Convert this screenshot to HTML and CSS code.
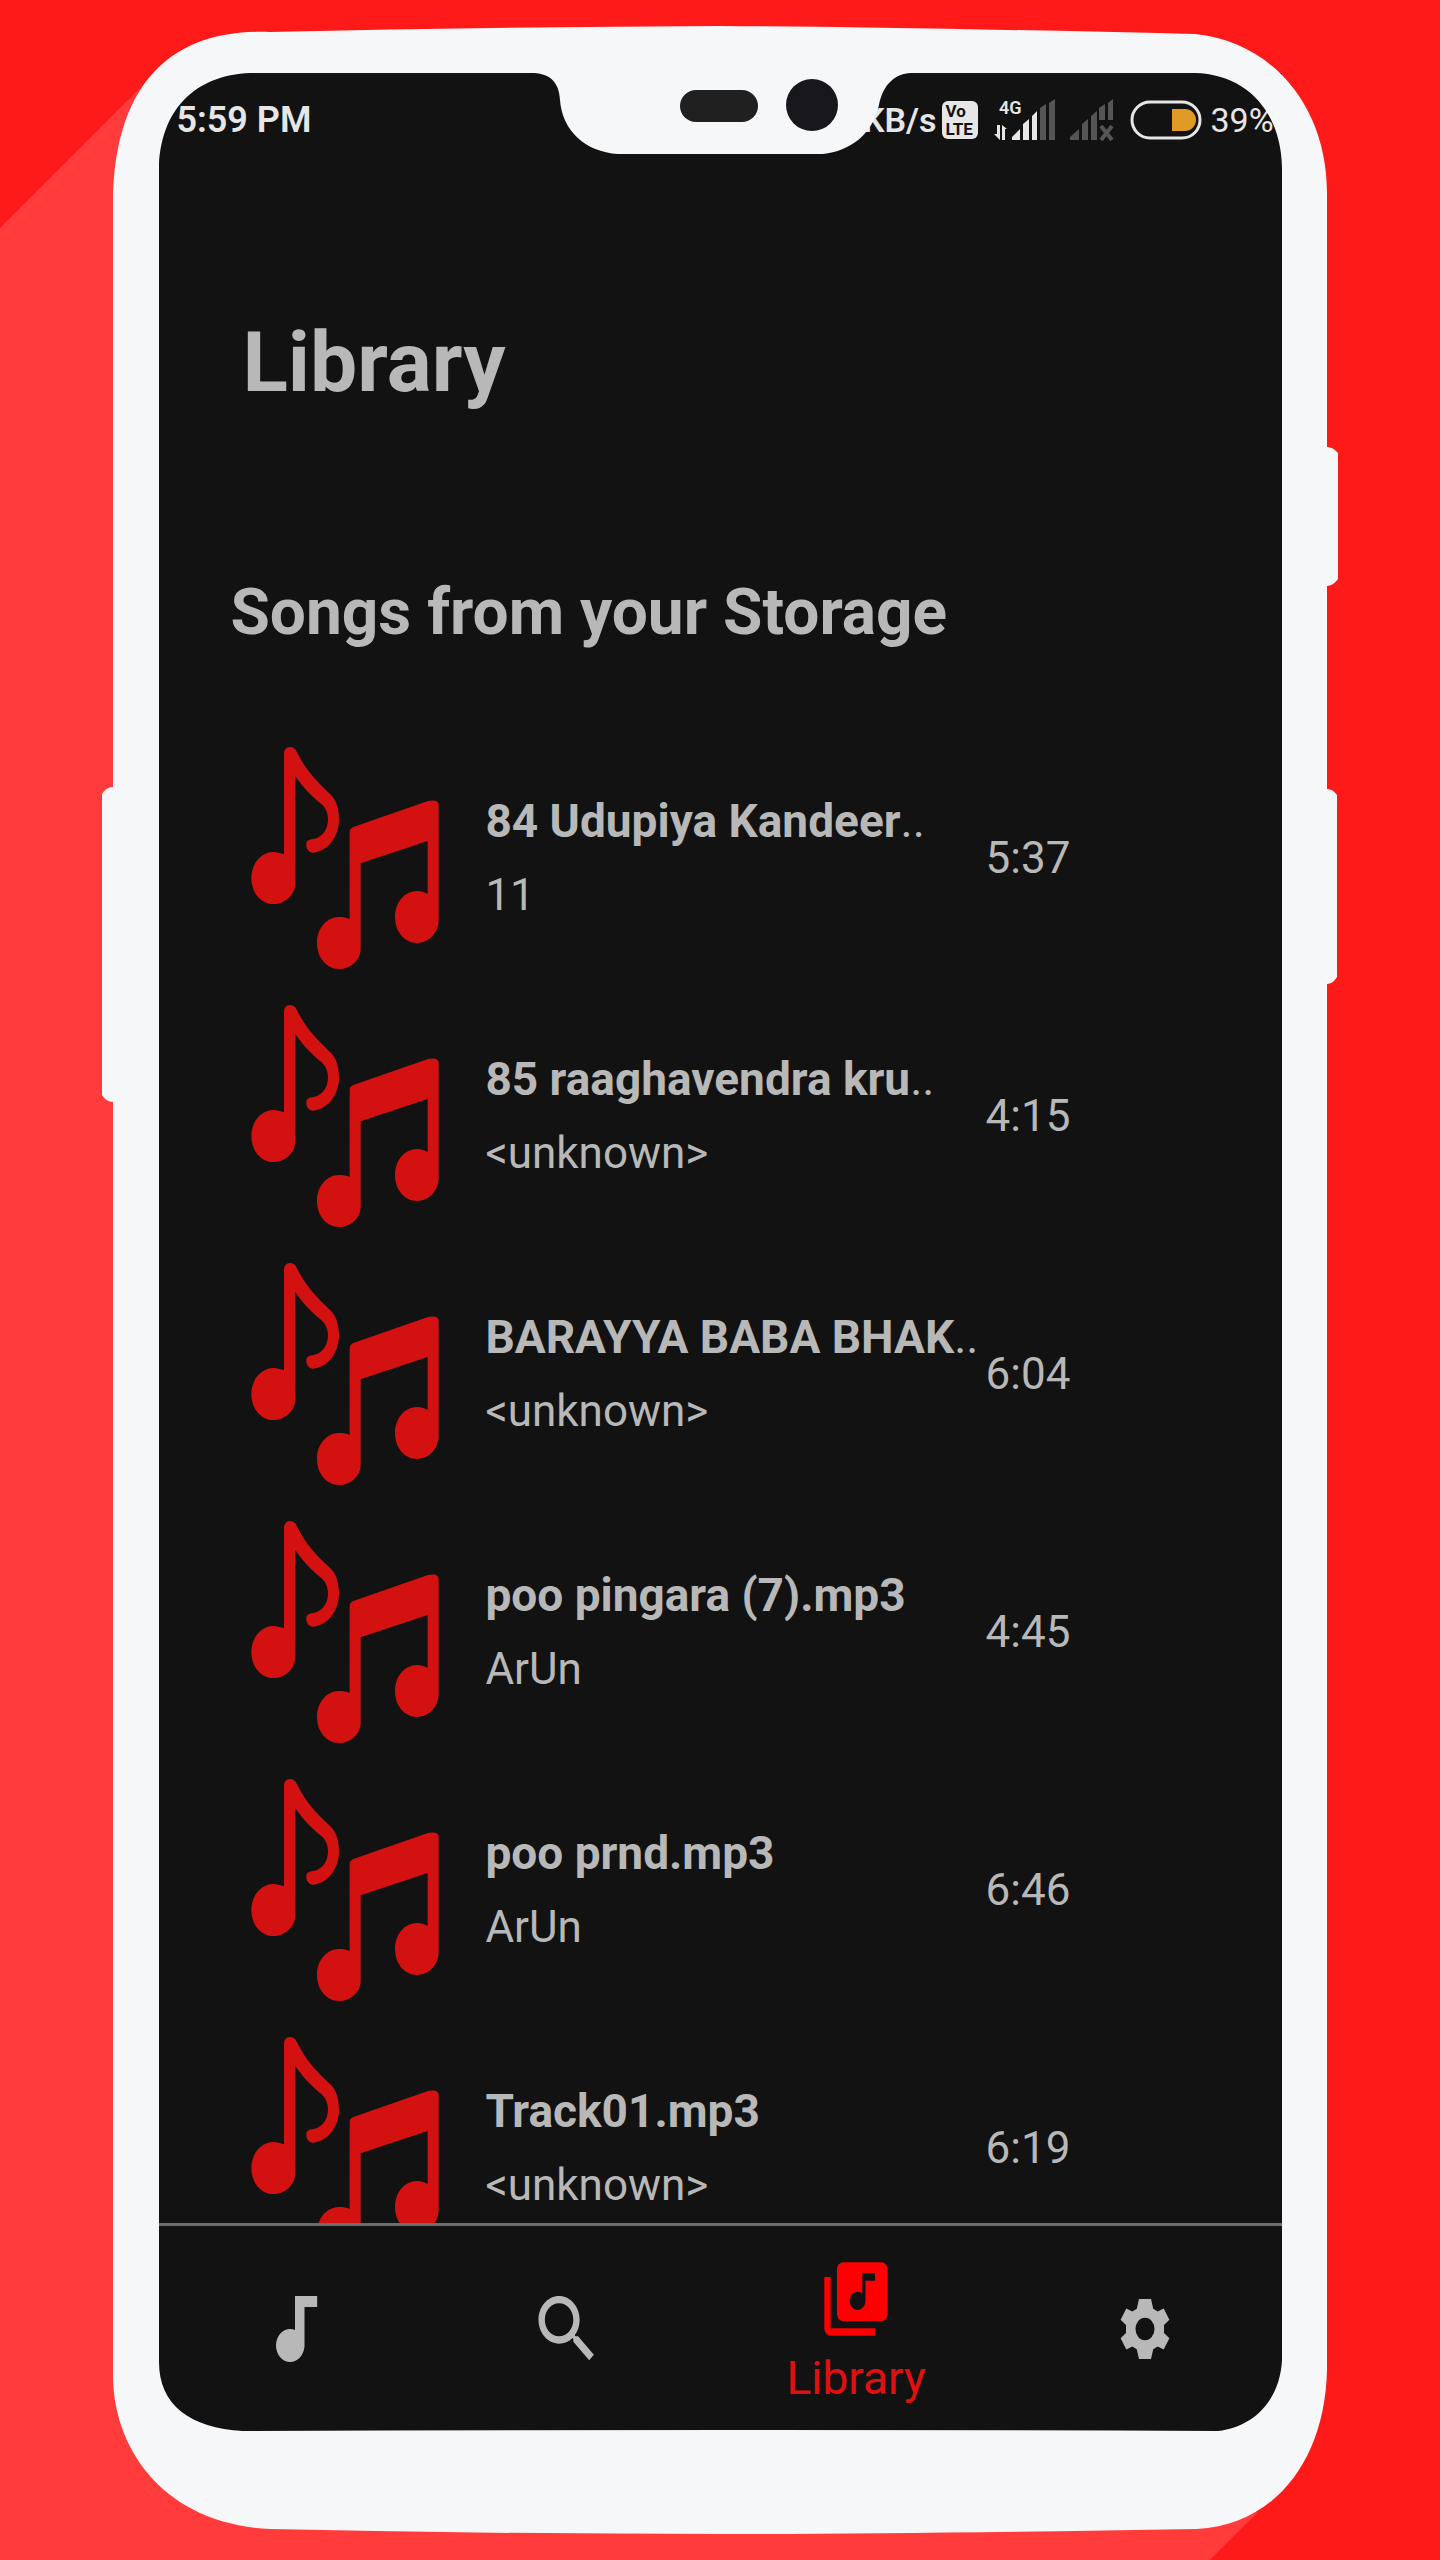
FILE: index.html
```html
<!DOCTYPE html>
<html lang="en">
<head>
<meta charset="utf-8">
<meta name="viewport" content="width=device-width, initial-scale=1">
<title>Library</title>
<link rel="stylesheet" href="styles.css">
</head>
<body>
<svg class="symbols" aria-hidden="true">
  <symbol id="notes" viewBox="0 0 562 666">
    <path d="M98 18Q100 2 115 0Q130 0 136 14C166 74 196 102 232 137C256 155 263 189 263 217C263 270 230 312 186 317C174 318 165 307 165 295C164 282 172 277 186 276C212 272 230 249 230 217C230 199 223 183 211 172C180 147 156 122 132 87V407C132 444 101 471 66 471C30 471 0 438 0 393C0 349 30 315 66 315C77 315 88 318 98 322Z"/>
    <path d="M295 255Q295 245 306 240L530 162Q562 156 562 174V517C562 560 531 588 497 588C461 588 431 555 431 510C431 466 461 432 497 432C509 432 519 435 529 441V282L328 349V605C328 640 297 666 263 666C227 666 197 633 197 588C197 543 227 510 263 510C275 510 286 512 295 516Z"/>
  </symbol>
</svg>
<div class="stage">
  <svg class="backdrop" viewBox="0 0 1440 2560" preserveAspectRatio="none" aria-hidden="true">
    <path fill="#ff3b3b" d="M0 228L140 88L1257 2513L1210 2560H0Z"/>
  </svg>

  <div class="screen">
    <header class="status">
      <span class="clock">5:59 PM</span>
      <div class="indicators">
        <span class="speed">KB/s</span>
        <span class="volte"><span>Vo</span><span>LTE</span></span>
        <svg class="signal" viewBox="0 0 62 44" role="img" aria-label="4G signal">
          <text x="5" y="16" class="network">4G</text>
          <g fill="#e6e6e6">
            <path d="M3 27h3v15l-6-6h3zM8 42V27l5 4h-2v11z"/>
            <path d="M18 42v-3l8-8v11zM29 42V26l6-5v21zM38 42V18l5-5v29z"/>
          </g>
          <path fill="#555" d="M46 42V10l6-4v36zM55 42V5l6-4v41z"/>
        </svg>
        <svg class="signal no-sim" viewBox="0 0 44 44" role="img" aria-label="No SIM">
          <path fill="#555" d="M0 42v-3l9-8v11zM12 42V26l6-5v21zM21 42V18l6-5v29zM29 22V10l6-4v16zM38 22V5l5-4v21z"/>
          <path d="M31 28l11 14M42 28L31 42" stroke="#555" stroke-width="4"/>
        </svg>
        <svg class="battery" viewBox="0 0 72 40" role="img" aria-label="Battery">
          <rect x="2" y="2" width="68" height="36" rx="18" fill="none" stroke="#e6e6e6" stroke-width="3"/>
          <path fill="#e09a25" d="M42 9h13a11 11 0 0 1 0 22H42z"/>
        </svg>
        <span class="charge">39%</span>
      </div>
    </header>

    <main class="content">
      <h1 class="title">Library</h1>
      <h2 class="subtitle">Songs from your Storage</h2>
      <ul class="songs">
        <li class="song">
          <svg class="cover" aria-hidden="true"><use href="#notes"/></svg>
          <div class="info"><p class="name">84 Udupiya Kandeer<span class="more">..</span></p><p class="artist">11</p></div>
          <time class="length">5:37</time>
        </li>
        <li class="song">
          <svg class="cover" aria-hidden="true"><use href="#notes"/></svg>
          <div class="info"><p class="name">85 raaghavendra kru<span class="more">..</span></p><p class="artist">&lt;unknown&gt;</p></div>
          <time class="length">4:15</time>
        </li>
        <li class="song">
          <svg class="cover" aria-hidden="true"><use href="#notes"/></svg>
          <div class="info"><p class="name">BARAYYA BABA BHAK<span class="more">..</span></p><p class="artist">&lt;unknown&gt;</p></div>
          <time class="length">6:04</time>
        </li>
        <li class="song">
          <svg class="cover" aria-hidden="true"><use href="#notes"/></svg>
          <div class="info"><p class="name">poo pingara (7).mp3</p><p class="artist">ArUn</p></div>
          <time class="length">4:45</time>
        </li>
        <li class="song">
          <svg class="cover" aria-hidden="true"><use href="#notes"/></svg>
          <div class="info"><p class="name">poo prnd.mp3</p><p class="artist">ArUn</p></div>
          <time class="length">6:46</time>
        </li>
        <li class="song">
          <svg class="cover" aria-hidden="true"><use href="#notes"/></svg>
          <div class="info"><p class="name">Track01.mp3</p><p class="artist">&lt;unknown&gt;</p></div>
          <time class="length">6:19</time>
        </li>
      </ul>
    </main>

    <nav class="tabs" aria-label="Main">
      <button class="tab" type="button" aria-label="Songs">
        <svg class="icon" viewBox="0 0 24 24" preserveAspectRatio="none"><path d="M12 3v9.28c-.47-.17-.97-.28-1.5-.28C8.01 12 6 14.01 6 16.5S8.01 21 10.5 21c2.31 0 4.2-1.75 4.45-4H15V6h4V3z"/></svg>
      </button>
      <button class="tab" type="button" aria-label="Search">
        <svg class="icon" viewBox="0 0 24 24" preserveAspectRatio="none"><path d="M15.5 14h-.79l-.28-.27C15.41 12.59 16 11.11 16 9.5 16 5.91 13.09 3 9.5 3S3 5.91 3 9.5 5.91 16 9.5 16c1.61 0 3.09-.59 4.23-1.57l.27.28v.79l5 4.99L20.49 19zm-6 0C7.01 14 5 11.99 5 9.5S7.01 5 9.5 5 14 7.01 14 9.5 11.99 14 9.5 14z"/></svg>
      </button>
      <button class="tab active" type="button" aria-current="page">
        <svg class="icon" viewBox="0 0 24 24" preserveAspectRatio="none"><path d="M20 2H8c-1.1 0-2 .9-2 2v12c0 1.1.9 2 2 2h12c1.1 0 2-.9 2-2V4c0-1.1-.9-2-2-2zm-2 5h-3v5.5c0 1.38-1.12 2.5-2.5 2.5S10 13.88 10 12.5s1.12-2.5 2.5-2.5c.57 0 1.08.19 1.5.51V5h4zM4 6H2v14c0 1.1.9 2 2 2h14v-2H4z"/></svg>
        <span class="label">Library</span>
      </button>
      <button class="tab" type="button" aria-label="Settings">
        <svg class="icon" viewBox="0 0 24 24" preserveAspectRatio="none"><path fill-rule="evenodd" d="M10.100 3.800h3.800L14.600 6.500 16 7.200 17.900 6.400 19.700 9.500 18 10.900V13.100L19.700 14.500 17.900 17.600 16 16.800 14.600 17.500 13.900 20.200H10.100L9.400 17.500 8 16.800 6.100 17.600 4.300 14.500 6 13.100V10.900L4.300 9.500 6.100 6.400 8 7.200 9.400 6.500ZM12 8.900a3 3.100 0 1 0 0 6.200 3 3.100 0 0 0 0-6.200z"/></svg>
      </button>
    </nav>
  </div>

  <svg class="frame" viewBox="0 0 1440 2560" preserveAspectRatio="none" aria-hidden="true">
    <path fill="#f6f7f9" fill-rule="evenodd" d="M113 200C115 85 170 28 270 32Q500 27 720 26Q900 27 1195 34C1275 42 1328 110 1327 195V447Q1333 447 1338 453V579Q1333 586 1327 586V789Q1333 789 1337 795V977Q1333 984 1327 984V2370C1325 2460 1275 2525 1197 2529Q900 2534 720 2534Q500 2534 270 2529C165 2524 113 2450 113 2375V1102Q106 1102 102 1095V794Q106 787 113 787ZM159 165C162 105 200 73 255 73H531C548 73 559 80 560 100C562 130 585 152 618 154H823C850 151 872 135 879 105C883 85 894 74 911 73H1195C1245 74 1281 110 1282 168V2360C1280 2400 1254 2427 1218 2431Q730 2429 243 2431C190 2428 159 2405 159 2362Z"/>
    <rect x="680" y="90" width="78" height="32" rx="16" fill="#202020"/>
    <circle cx="812" cy="105" r="26" fill="#17171c"/>
  </svg>
</div>
</body>
</html>
```
FILE: styles.css
```css
* {
  box-sizing: border-box;
}

body {
  margin: 0;
  background: #ff1a1a;
  color: #b8b8b8;
  font-family: Roboto, "Liberation Sans", sans-serif;
}

h1, h2, p, ul {
  margin: 0;
  padding: 0;
}

.symbols {
  position: absolute;
  width: 0;
  height: 0;
}

.stage {
  position: relative;
  display: flex;
  height: 100vh;
  padding: 73px 11% 129px;
}

.backdrop,
.frame {
  position: absolute;
  inset: 0;
  width: 100%;
  height: 100%;
  pointer-events: none;
}

.screen {
  position: relative;
  flex: 1;
  min-width: 0;
  display: flex;
  flex-direction: column;
  background: #121212;
}

.status {
  display: flex;
  justify-content: space-between;
  align-items: center;
  height: 94px;
  padding: 0 8px 0 18px;
  color: #e6e6e6;
}

.clock {
  font-size: 36px;
  font-weight: 600;
}

.indicators {
  display: flex;
  align-items: center;
}

.speed {
  font-size: 34px;
  font-weight: 600;
}

.volte {
  display: flex;
  flex-direction: column;
  width: 36px;
  height: 38px;
  margin: 0 16px 0 6px;
  padding: 1px 3px;
  border-radius: 6px;
  background: #e6e6e6;
  color: #121212;
  font-size: 17px;
  font-weight: 700;
  line-height: 18px;
}

.signal {
  width: 62px;
  height: 44px;
}

.no-sim {
  width: 44px;
  margin: 0 16px 0 14px;
}

.network {
  fill: #e6e6e6;
  font-size: 18px;
  font-weight: 600;
}

.battery {
  width: 72px;
  height: 40px;
  margin-right: 8px;
}

.charge {
  font-size: 34px;
}

.content {
  flex: 1;
  min-height: 0;
  overflow: hidden;
}

.title {
  padding: 146px 0 0 84px;
  font-size: 84px;
  font-weight: 700;
  line-height: 100px;
}

.subtitle {
  padding: 160px 0 76px 72px;
  font-size: 64px;
  font-weight: 700;
  line-height: 80px;
}

.songs {
  list-style: none;
}

.song {
  display: grid;
  grid-template-columns: 188px minmax(0, 1fr) 296px;
  column-gap: 46px;
  align-items: center;
  height: 258px;
  padding-left: 93px;
}

.cover {
  width: 188px;
  height: 222px;
  fill: #d41111;
}

.info {
  white-space: nowrap;
}

.name {
  font-size: 46px;
  font-weight: 700;
  line-height: 74px;
}

.more {
  font-weight: 400;
}

.artist,
.length {
  font-size: 44px;
  line-height: 74px;
}

.tabs {
  display: flex;
  height: 208px;
  border-top: 3px solid #6e6a6a;
}

.tab {
  flex: 8;
  display: flex;
  flex-direction: column;
  align-items: center;
  justify-content: center;
  gap: 10px;
  padding: 0;
  border: 0;
  background: none;
  color: inherit;
  font: inherit;
}

.tab.active {
  flex: 9;
  color: #ff0000;
}

.icon {
  width: 76px;
  height: 88px;
  fill: currentColor;
}

.label {
  color: #e01010;
  font-size: 46px;
  line-height: 50px;
}
```
